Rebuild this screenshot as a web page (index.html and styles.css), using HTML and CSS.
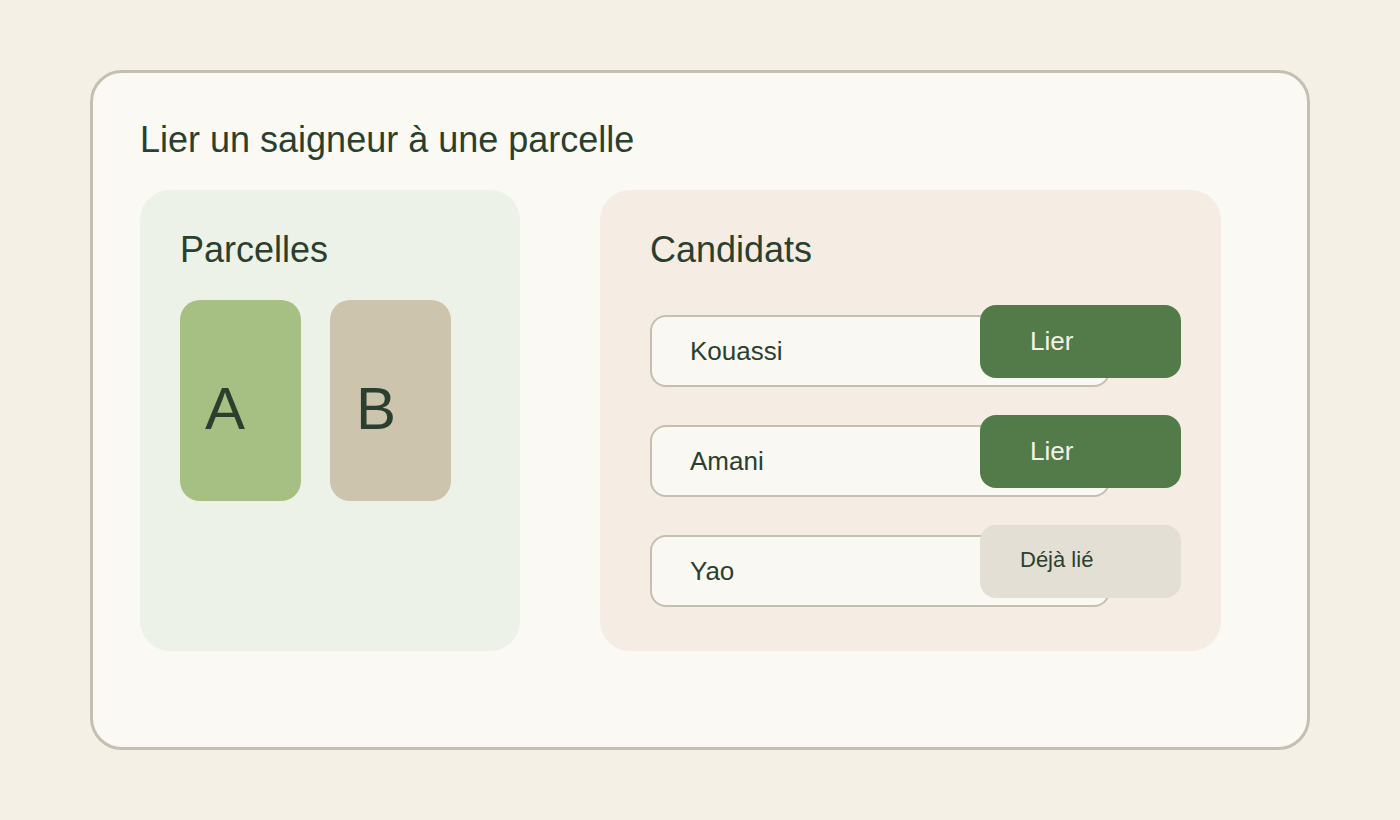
FILE: index.html
```html
<!DOCTYPE html>
<html lang="fr">
<head>
<meta charset="utf-8">
<title>Lier un saigneur à une parcelle</title>
<link rel="stylesheet" href="styles.css">
</head>
<body>
  <main class="card">
    <h1 class="title">Lier un saigneur à une parcelle</h1>
    <div class="panels">
      <section class="panel panel-parcels">
        <h2 class="panel-title">Parcelles</h2>
        <div class="parcels">
          <div class="parcel parcel-a">A</div>
          <div class="parcel parcel-b">B</div>
        </div>
      </section>
      <section class="panel panel-candidates">
        <h2 class="panel-title">Candidats</h2>
        <ul class="candidates">
          <li class="candidate">
            <span class="name">Kouassi</span>
            <button class="action action-link">Lier</button>
          </li>
          <li class="candidate">
            <span class="name">Amani</span>
            <button class="action action-link">Lier</button>
          </li>
          <li class="candidate">
            <span class="name">Yao</span>
            <button class="action action-done">Déjà lié</button>
          </li>
        </ul>
      </section>
    </div>
  </main>
</body>
</html>
```
FILE: styles.css
```css
* { box-sizing: border-box; }

html, body {
  margin: 0;
  padding: 0;
}

body {
  background: #f4f0e6;
  font-family: "Liberation Sans", Arial, sans-serif;
  color: #2b3f2e;
  padding: 70px 0 0 90px;
  width: 1400px;
  height: 820px;
}

.card {
  width: 1220px;
  height: 680px;
  background: #faf9f4;
  border: 3px solid #c4bfb0;
  border-radius: 32px;
  padding: 47px 0 0 47px;
}

.title {
  margin: 0;
  font-size: 36px;
  line-height: 40px;
  font-weight: 400;
}

.panels {
  display: flex;
  gap: 80px;
  margin-top: 30px;
}

.panel {
  height: 461px;
  border-radius: 30px;
}

.panel-parcels {
  width: 380px;
  background: #edf2e8;
  padding: 40px 0 0 40px;
}

.panel-candidates {
  width: 621px;
  background: #f5ede3;
  padding: 40px 0 0 50px;
}

.panel-title {
  margin: 0;
  font-size: 36px;
  line-height: 40px;
  font-weight: 400;
}

.parcels {
  display: flex;
  gap: 29px;
  margin-top: 30px;
}

.parcel {
  width: 121px;
  height: 201px;
  border-radius: 20px;
  font-size: 60px;
  line-height: 60px;
  padding: 79px 0 0 25px;
}

.parcel-a { background: #a6c084; }
.parcel-b { background: #cdc4ae; padding-left: 26px; }

.candidates {
  list-style: none;
  margin: 45px 0 0 0;
  padding: 0;
  display: flex;
  flex-direction: column;
  gap: 38px;
}

.candidate {
  position: relative;
  width: 460px;
  height: 72px;
  background: #f9f8f2;
  border: 2px solid #c4bfb0;
  border-radius: 16px;
  display: flex;
  align-items: center;
  padding: 0 0 0 38px;
}

.name {
  font-size: 26px;
  line-height: 30px;
}

.action {
  position: absolute;
  top: -12px;
  left: 328px;
  width: 201px;
  height: 73px;
  border: none;
  border-radius: 16px;
  font-family: "Liberation Sans", Arial, sans-serif;
  display: flex;
  align-items: center;
  margin: 0;
  cursor: pointer;
}

.action-link {
  background: #537b4a;
  color: #f3f1e8;
  font-size: 26px;
  line-height: 30px;
  padding: 0 0 2px 50px;
}

.action-done {
  background: #e3dfd4;
  color: #2b3f2e;
  font-size: 22px;
  line-height: 30px;
  padding: 0 0 4px 40px;
}
```
